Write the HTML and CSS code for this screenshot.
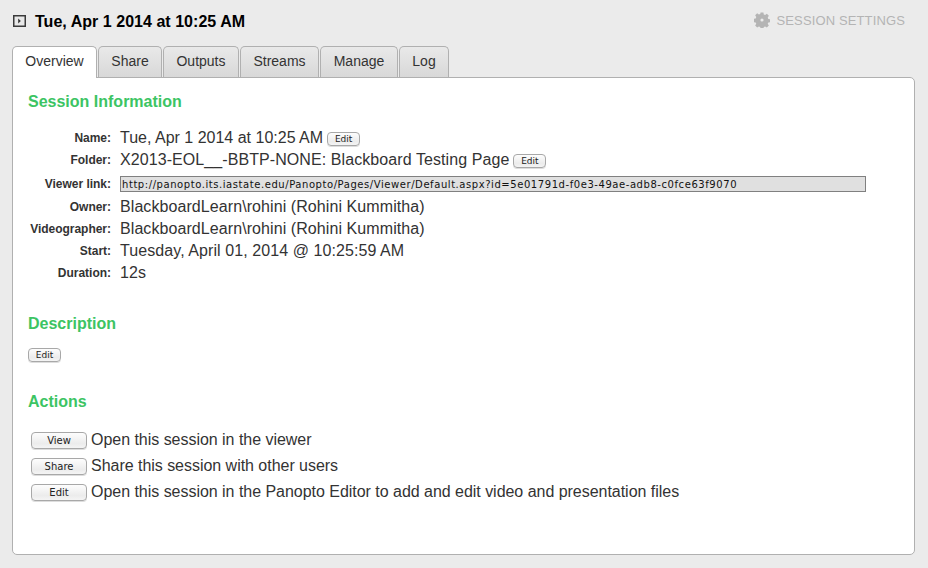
FILE: index.html
```html
<!DOCTYPE html>
<html lang="en">
<head>
<meta charset="utf-8">
<title>Session</title>
<link rel="stylesheet" href="styles.css">
</head>
<body>
<div class="page">
  <header class="header">
    <div class="title-wrap">
      <svg class="play-icon" viewBox="0 0 13 12" width="13" height="12" aria-hidden="true">
        <rect x="0.75" y="0.75" width="11.5" height="10.5" fill="#e8e8e8" stroke="#3a3a3a" stroke-width="1.5"/>
        <path d="M5.2 3.4 L7.8 6 L5.2 8.6 Z" fill="#333"/>
      </svg>
      <h1 class="title">Tue, Apr 1 2014 at 10:25 AM</h1>
    </div>
    <div class="settings">
      <svg class="gear" viewBox="0 0 16 16" width="16" height="16" aria-hidden="true">
        <path fill="#b4b4b4" fill-rule="evenodd" d="M6.6 0.4h2.8l.4 2 1.3.55 1.75-1.1 2 2-1.1 1.75.55 1.3 2 .4v2.8l-2 .4-.55 1.3 1.1 1.75-2 2-1.75-1.1-1.3.55-.4 2H6.6l-.4-2-1.3-.55-1.75 1.1-2-2 1.1-1.75-.55-1.3-2-.4V6.8l2-.4.55-1.3-1.1-1.75 2-2 1.75 1.1 1.3-.55zM8 6.4a1.6 1.6 0 1 0 0 3.2 1.6 1.6 0 0 0 0-3.2z"/>
      </svg>
      <span>SESSION SETTINGS</span>
    </div>
  </header>
  <nav class="tabs">
    <a class="tab tab-active tab-overview">Overview</a>
    <a class="tab tab-share">Share</a>
    <a class="tab tab-outputs">Outputs</a>
    <a class="tab tab-streams">Streams</a>
    <a class="tab tab-manage">Manage</a>
    <a class="tab tab-log">Log</a>
  </nav>
  <main class="panel">
    <h2 class="heading">Session Information</h2>
    <dl class="info">
      <div class="row"><dt>Name:</dt><dd class="name-value">Tue, Apr 1 2014 at 10:25 AM <button class="btn btn-small">Edit</button></dd></div>
      <div class="row"><dt>Folder:</dt><dd>X2013-EOL__-BBTP-NONE: Blackboard Testing Page <button class="btn btn-small">Edit</button></dd></div>
      <div class="row row-link"><dt>Viewer link:</dt><dd><div class="link">http://panopto.its.iastate.edu/Panopto/Pages/Viewer/Default.aspx?id=5e01791d-f0e3-49ae-adb8-c0fce63f9070</div></dd></div>
      <div class="row"><dt>Owner:</dt><dd>BlackboardLearn\rohini (Rohini Kummitha)</dd></div>
      <div class="row"><dt>Videographer:</dt><dd>BlackboardLearn\rohini (Rohini Kummitha)</dd></div>
      <div class="row"><dt>Start:</dt><dd>Tuesday, April 01, 2014 @ 10:25:59 AM</dd></div>
      <div class="row"><dt>Duration:</dt><dd>12s</dd></div>
    </dl>
    <h2 class="heading heading-desc">Description</h2>
    <button class="btn btn-small btn-desc">Edit</button>
    <h2 class="heading heading-actions">Actions</h2>
    <div class="actions">
      <div class="action"><button class="btn btn-wide">View</button><span>Open this session in the viewer</span></div>
      <div class="action"><button class="btn btn-wide">Share</button><span>Share this session with other users</span></div>
      <div class="action"><button class="btn btn-wide">Edit</button><span>Open this session in the Panopto Editor to add and edit video and presentation files</span></div>
    </div>
  </main>
</div>
</body>
</html>
```
FILE: styles.css
```css
* { box-sizing: border-box; }
html, body { margin: 0; height: 100%; }
body {
  background: #ebebeb;
  font-family: "Liberation Sans", Arial, sans-serif;
  color: #333;
  overflow: hidden;
}
.page { width: 928px; height: 568px; padding: 0 13px 13px 12px; display: flex; flex-direction: column; }
.header { height: 46px; display: flex; justify-content: space-between; align-items: flex-start; padding-top: 13px; }
.title-wrap { display: flex; align-items: center; height: 18px; padding-left: 1px; }
.play-icon { display: block; margin-top: -2px; }
.title { margin: 0 0 0 9px; font-size: 16px; line-height: 18px; font-weight: bold; color: #000; letter-spacing: 0.03px; }
.settings { display: flex; align-items: center; height: 16px; margin-top: -1px; color: #b4b4b4; font-size: 13px; letter-spacing: 0.13px; padding-right: 10px; }
.gear { margin-right: 7px; }
.tabs { display: flex; height: 31px; position: relative; z-index: 1; }
.tab {
  display: flex; align-items: center; justify-content: center;
  height: 31px; margin-right: 1px;
  border: 1px solid #b0b0b0; border-bottom: 0; border-radius: 5px 5px 0 0;
  background: linear-gradient(#e9e9e9, #d8d8d8);
  font-size: 14px; color: #333; padding-bottom: 3px;
}
.tab-overview { width: 85px; }
.tab-share { width: 64px; }
.tab-outputs { width: 76px; }
.tab-streams { width: 79px; }
.tab-manage { width: 78px; }
.tab-log { width: 50px; }
.tab-active { background: #fff; height: 32px; }
.panel {
  flex: 1;
  background: #fff;
  border: 1px solid #b0b0b0;
  border-radius: 0 5px 5px 5px;
  padding: 15px 15px 0;
}
.heading { margin: 0; font-size: 16px; line-height: 18px; font-weight: bold; color: #3cc463; }
.info { margin: 16px 0 0; }
.row { display: flex; align-items: center; height: 22px; }
.row-link { height: 25px; }
dt { width: 83px; margin-right: 9px; text-align: right; font-size: 12px; font-weight: bold; letter-spacing: -0.02px; color: #333; white-space: nowrap; }
dd { margin: 0; font-size: 16px; letter-spacing: 0.08px; color: #333; white-space: nowrap; display: flex; align-items: center; gap: 4px; }
.name-value { letter-spacing: 0; }
.link {
  width: 746px; height: 16px;
  background: #e0e0e0; border: 1px solid #808080;
  font-family: "DejaVu Sans", sans-serif; font-size: 10px; line-height: 15px;
  color: #111; padding-left: 1px; letter-spacing: 0.565px;
}
.btn {
  font-family: "DejaVu Sans", sans-serif; color: #222; letter-spacing: 0;
  border: 1px solid #a8a8a8; border-radius: 4px;
  background: linear-gradient(#fdfdfd, #ececec 70%, #f4f4f4);
  padding: 0; margin: 0;
  box-shadow: 0 1px 0 #ddd;
}
.btn-small { width: 33px; height: 14px; margin-top: 2px; font-size: 9px; line-height: 12px; }
.btn-wide { width: 56px; height: 17px; margin-top: 1px; font-size: 10px; line-height: 15px; }
.heading-desc { margin-top: 31px; }
.btn-desc { display: block; margin-top: 15px; }
.heading-actions { margin-top: 31px; }
.actions { margin: 16px 0 0 3px; }
.action { display: flex; align-items: center; height: 26px; font-size: 16px; letter-spacing: -0.03px; color: #333; gap: 4px; white-space: nowrap; }
```
